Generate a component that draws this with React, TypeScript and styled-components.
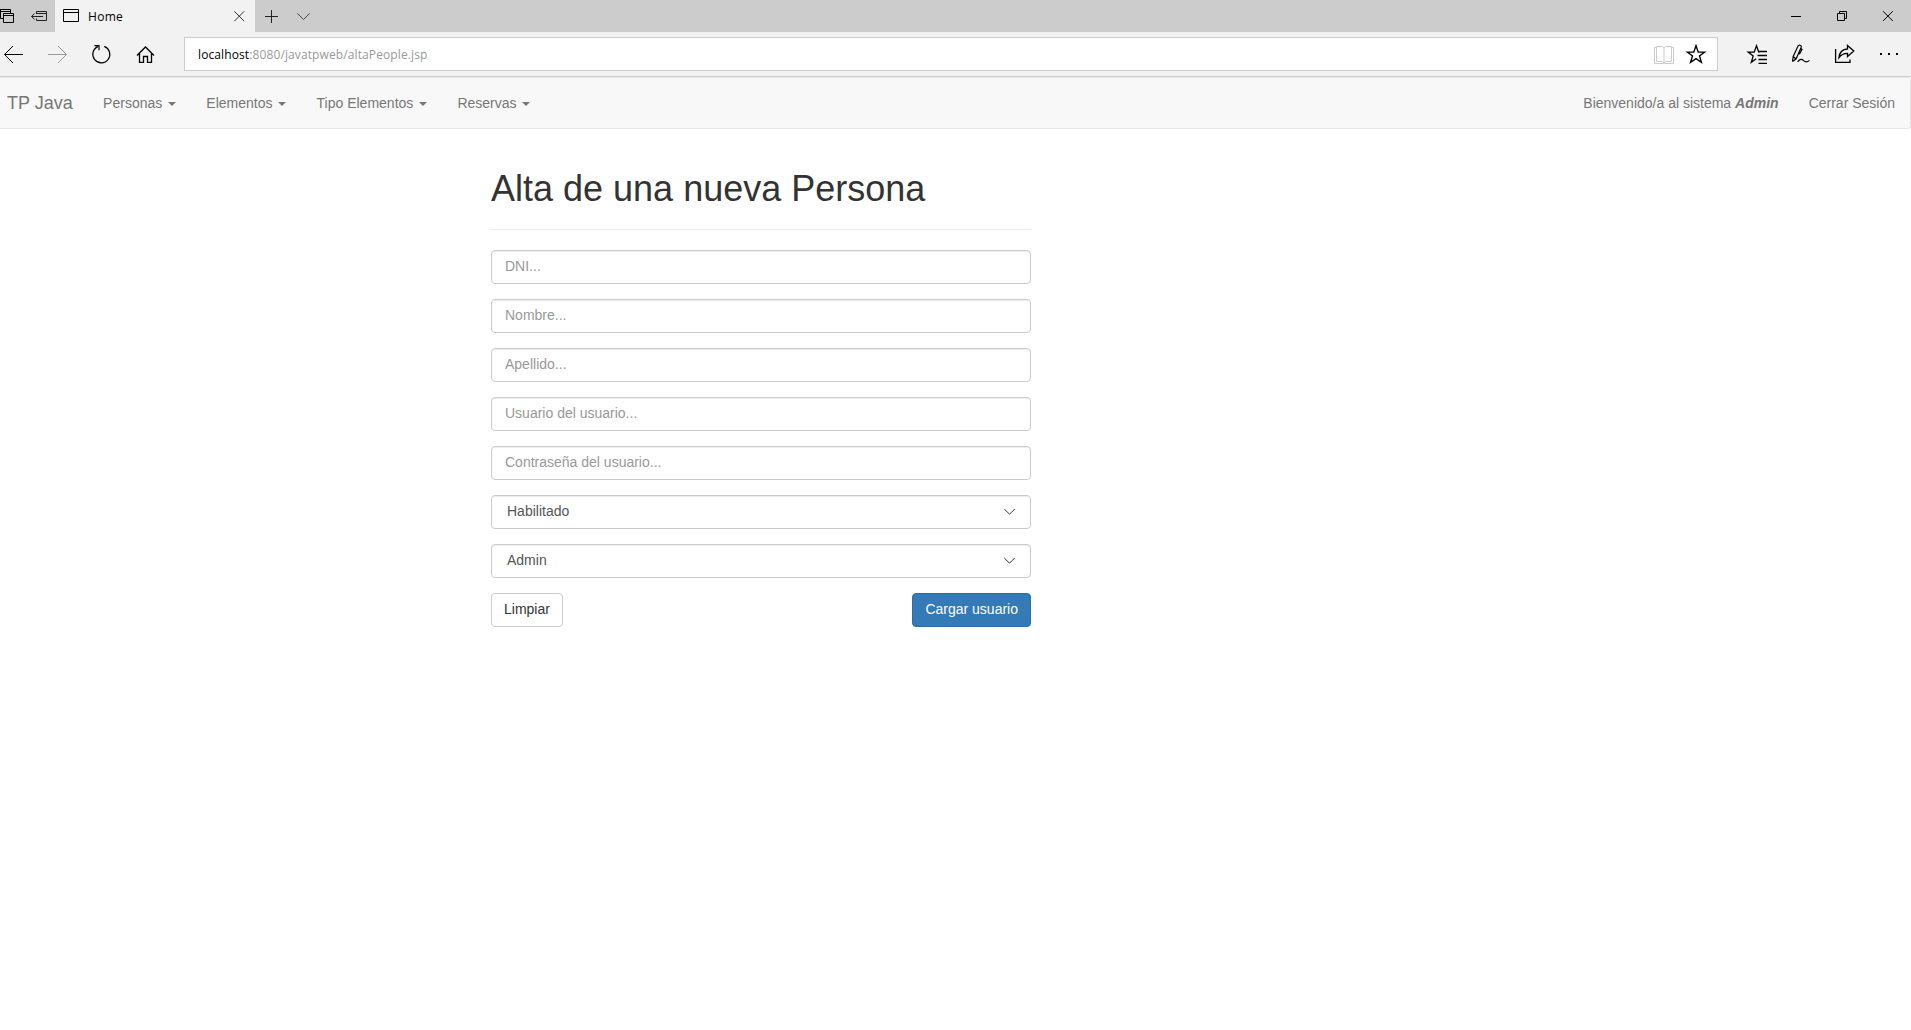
import React from 'react';
import styled, { createGlobalStyle } from 'styled-components';

const GlobalStyle = createGlobalStyle`
  *, *::before, *::after { box-sizing: border-box; }
  body {
    margin: 0;
    background: #fff;
    color: #333;
    font: 14px/20px "Liberation Sans", Arial, sans-serif;
    overflow: hidden;
  }
`;

const Page = styled.div`
  display: flex;
  flex-direction: column;
  width: 1911px;
  height: 1030px;
`;

/* ---------- browser chrome ---------- */

const TabStrip = styled.div`
  display: flex;
  height: 32px;
  background: #ccc;
`;

const TabTools = styled.div`
  display: flex;
  width: 55px;
  gap: 14px;
`;

const Tab = styled.div`
  display: flex;
  align-items: center;
  width: 200px;
  padding: 0 9px 0 7px;
  background: #f2f2f2;
`;

const TabTitle = styled.span`
  flex: 1;
  padding: 1px 0 0 7px;
  color: #000;
  font: 12px/31px "Open Sans", "Noto Sans", sans-serif;
  letter-spacing: 0.3px;
`;

const WindowButtons = styled.div`
  display: flex;
  gap: 26px;
  margin-left: auto;
  padding-right: 13px;
`;

const Toolbar = styled.div`
  display: flex;
  height: 45px;
  background: #f2f2f2;
  border-bottom: 1px solid #ccc;
`;

const NavButtons = styled.div`
  display: flex;
  gap: 20px;
  width: 184px;
  padding-left: 2px;
`;

const AddressBar = styled.div`
  display: flex;
  align-items: center;
  width: 1534px;
  height: 34px;
  margin-top: 5px;
  padding: 0 11px 0 13px;
  background: #fff;
  border: 1px solid #ccc;
`;

const Url = styled.span`
  flex: 1;
  padding-top: 1px;
  color: #999;
  font: 12px/31px "Open Sans", "Noto Sans", sans-serif;
  letter-spacing: 0.11px;
`;

const Host = styled.span`
  color: #000;
`;

const AddressIcons = styled.div`
  display: flex;
  gap: 11px;
`;

const ToolbarActions = styled.div`
  display: flex;
  gap: 20px;
  margin-left: auto;
  padding-right: 10px;
`;

const Icon = styled.svg<{ $tone?: string; $weight?: number }>`
  display: block;
  flex: none;
  fill: none;
  stroke: ${(p) => p.$tone || '#000'};
  stroke-width: ${(p) => p.$weight || 1};
`;

/* ---------- site navigation ---------- */

const Navbar = styled.nav`
  display: flex;
  height: 52px;
  padding-left: 7px;
  background: #f8f8f8;
  border: 1px solid #e7e7e7;
  border-left: 0;
  border-radius: 0 4px 4px 0;
  color: #777;
`;

const Brand = styled.a`
  padding: 15px 15px 15px 0;
  font-size: 18px;
  line-height: 20px;
`;

const NavList = styled.div<{ $end?: boolean }>`
  display: flex;
  margin-left: ${(p) => (p.$end ? 'auto' : '0.4px')};
`;

const NavLink = styled.a`
  padding: 15px;
  white-space: nowrap;
`;

const Caret = styled.span`
  display: inline-block;
  margin: 0 0.2px 0 2px;
  vertical-align: middle;
  border-top: 4px solid #777;
  border-left: 4px solid transparent;
  border-right: 4px solid transparent;
`;

/* ---------- form ---------- */

const Form = styled.form`
  display: flex;
  flex-direction: column;
  gap: 15px;
  width: 540px;
  margin: 40px 0 0 491px;
`;

const Header = styled.header`
  height: 61px;
  margin-bottom: 5px;
  border-bottom: 1px solid #eee;
`;

const Title = styled.h1`
  margin: 0;
  font-size: 36px;
  font-weight: 500;
  line-height: 39.6px;
`;

const fieldBox = `
  width: 100%;
  height: 34px;
  color: #555;
  background: #fff;
  border: 1px solid #ccc;
  border-radius: 4px;
  box-shadow: inset 0 1px 1px rgba(0, 0, 0, 0.075);
  font: 14px/20px "Liberation Sans", Arial, sans-serif;
`;

const Input = styled.input`
  ${fieldBox}
  padding: 5px 13px 7px;
  outline: none;
  &::placeholder { color: #999; opacity: 1; }
`;

const Select = styled.div`
  ${fieldBox}
  display: flex;
  justify-content: space-between;
  padding: 5px 13px 7px 15px;
`;

const Actions = styled.div`
  display: flex;
  justify-content: space-between;
`;

const Button = styled.button<{ $primary?: boolean }>`
  height: 34px;
  padding: 5px 12px 7px;
  color: ${(p) => (p.$primary ? '#fff' : '#333')};
  background: ${(p) => (p.$primary ? '#337ab7' : '#fff')};
  border: 1px solid ${(p) => (p.$primary ? '#2e6da4' : '#ccc')};
  border-radius: 4px;
  font: 14px/20px "Liberation Sans", Arial, sans-serif;
`;

const menus = ['Personas', 'Elementos', 'Tipo Elementos', 'Reservas'];
const fields = ['DNI...', 'Nombre...', 'Apellido...', 'Usuario del usuario...', 'Contraseña del usuario...'];
const selects = ['Habilitado', 'Admin'];

const starPath = 'M10 13.8L12.2 20.1H18.6L13.5 24L15.4 30.3L10 26.6L4.6 30.3L6.5 24L1.4 20.1H7.8Z';

export default function App() {
  return (
    <Page>
      <GlobalStyle />
      <TabStrip>
        <TabTools>
          <Icon width="16" height="32">
            <path d="M0 9.5H10.5V13M0 11.5H10.5M0.5 9V18.5H4" />
            <path d="M3.5 13.5H13.5V22.5H3.5ZM3 15.5H14" />
          </Icon>
          <Icon width="20" height="32" $tone="#222">
            <path d="M6.5 14V11.5H16.5V20.5H6.5V18.5M6 13.5H17M1.5 16.5H13M4.5 13.5L1.5 16.5L4.5 19.5" />
          </Icon>
        </TabTools>
        <Tab>
          <Icon width="19" height="32">
            <path d="M1.5 9.5H16.5V21.5H1.5ZM1 12.5H17" />
          </Icon>
          <TabTitle>Home</TabTitle>
          <Icon width="14" height="32" $tone="#333">
            <path d="M2.3 11.3L12.2 21.2M12.2 11.3L2.3 21.2" />
          </Icon>
        </Tab>
        <Icon width="32" height="32" $tone="#222">
          <path d="M10 16.5H23M16.5 10V23" />
        </Icon>
        <Icon width="34" height="32" $tone="#444">
          <path d="M10.3 13.3L16.5 19.5L22.7 13.3" />
        </Icon>
        <WindowButtons>
          <Icon width="20" height="32">
            <path d="M5 16.5H15" />
          </Icon>
          <Icon width="20" height="32">
            <path d="M5.5 13.5H12.5V20.5H5.5ZM7.5 13.5V11.5H14.5V18.5H12.5" />
          </Icon>
          <Icon width="20" height="32">
            <path d="M5 11.2L14.8 21M14.8 11.2L5 21" />
          </Icon>
        </WindowButtons>
      </TabStrip>

      <Toolbar>
        <NavButtons>
          <Icon width="24" height="44">
            <path d="M2.5 22.5H21M11 14L2.5 22.5L11 31" />
          </Icon>
          <Icon width="24" height="44" $tone="#999">
            <path d="M2 22.5H20.5M12 14L20.5 22.5L12 31" />
          </Icon>
          <Icon width="24" height="44" $weight={1.2}>
            <path d="M14.3 14.4A8.5 8.5 0 1 1 7.8 14.6M4.5 13.6H9V18.2" />
          </Icon>
          <Icon width="24" height="44" $weight={1.3}>
            <path d="M3 23.5L11.5 15L20 23.5M5.5 21.5V30.4H9.5V24.5H13.5V30.4H17.5V21.5" />
          </Icon>
        </NavButtons>
        <AddressBar>
          <Url>
            <Host>localhost</Host>:8080/javatpweb/altaPeople.jsp
          </Url>
          <AddressIcons>
            <Icon width="22" height="44" $tone="#ccc">
              <path d="M3.5 15.5H1.5V31.5H20.5V15.5H18.5M3.5 14.5V29.5H9.5L11 31L12.5 29.5H18.5V14.5H12.5L11 16L9.5 14.5H3.5M11 16V31" />
            </Icon>
            <Icon width="20" height="44" $weight={1.4}>
              <path d={starPath} />
            </Icon>
          </AddressIcons>
        </AddressBar>
        <ToolbarActions>
          <Icon width="24" height="44" $weight={1.3}>
            <path d="M15 19.8H13.6L11.5 13.8L9.2 20.1H3.2L8.2 24L6.3 30.3L11.2 26.8M14.3 19.5H22M12.5 23.5H22M13.5 27.5H22M13.5 31.3H22" />
          </Icon>
          <Icon width="24" height="44" $weight={1.2}>
            <path d="M3.5 29.6L4.2 24.5L8.8 14.4C9.6 12.4 12.8 13 12.2 15.2L7 27L3.5 29.6M4.2 24.5L7 27M11.6 16.2L13 17.4L10.4 22.2M8.6 29.8C11 26.8 13 26.8 14.6 28.6C16.5 30.5 18.5 30 20.5 28.4" />
          </Icon>
          <Icon width="24" height="44" $weight={1.3}>
            <path d="M2.6 17V30.4H17V27.5M6 25.6C6.5 20.2 9.5 17.2 14.5 17V13.4L20.8 19L14.5 24.6V21.3C10.5 21.2 8 22.7 6 25.6Z" />
          </Icon>
          <Icon width="24" height="44" $weight={2}>
            <path d="M3 22H5M11 22H13M19 22H21" />
          </Icon>
        </ToolbarActions>
      </Toolbar>

      <Navbar>
        <Brand>TP Java</Brand>
        <NavList>
          {menus.map((m) => (
            <NavLink key={m}>
              {m} <Caret />
            </NavLink>
          ))}
        </NavList>
        <NavList $end>
          <NavLink>
            Bienvenido/a al sistema <b><i>Admin</i></b>
          </NavLink>
          <NavLink>Cerrar Sesión</NavLink>
        </NavList>
      </Navbar>

      <Form>
        <Header>
          <Title>Alta de una nueva Persona</Title>
        </Header>
        {fields.map((f) => (
          <Input key={f} placeholder={f} />
        ))}
        {selects.map((s) => (
          <Select key={s}>
            {s}
            <Icon width="14" height="20" $tone="#333">
              <path d="M1.3 8L6.5 13.2L11.7 8" />
            </Icon>
          </Select>
        ))}
        <Actions>
          <Button type="button">Limpiar</Button>
          <Button type="button" $primary>Cargar usuario</Button>
        </Actions>
      </Form>
    </Page>
  );
}
